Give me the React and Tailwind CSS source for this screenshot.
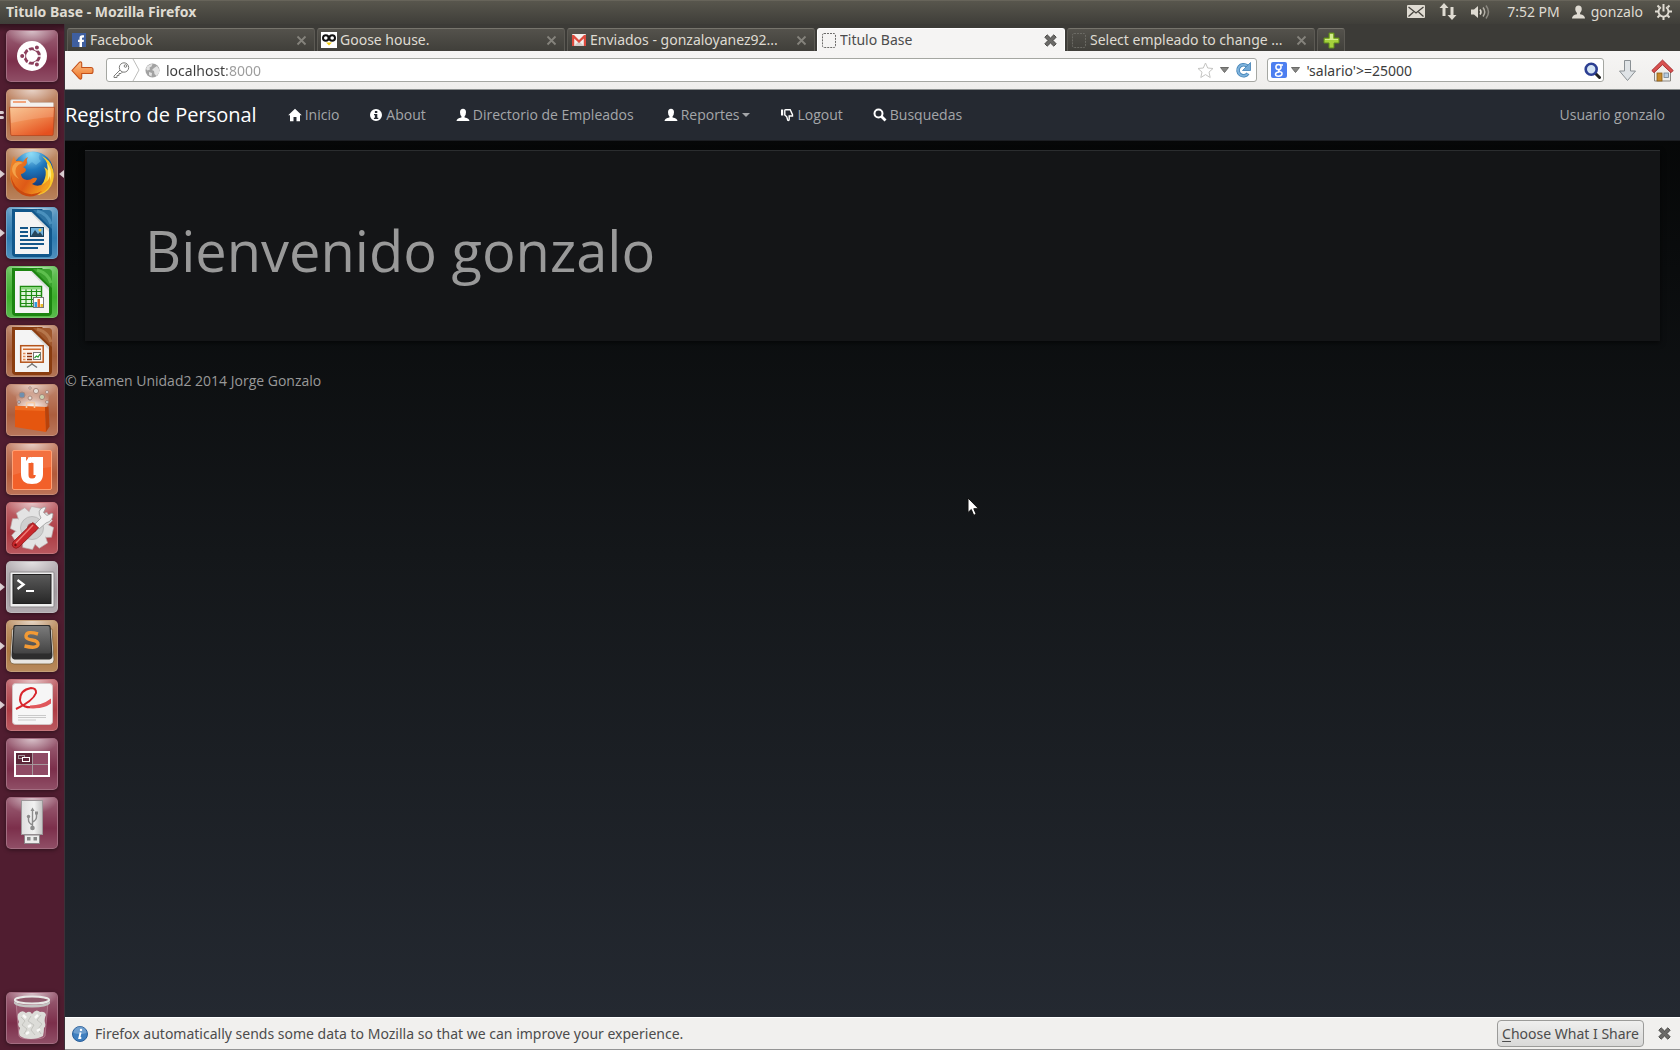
import React from "react";

/* ---------- launcher artwork (52 x 52 drawings) ---------- */

function UbuntuLogo() {
  return (
    <svg viewBox="0 0 52 52" className="size-full" aria-hidden="true">
      <circle cx="26" cy="26" r="15" fill="#fff" />
      <circle cx="26" cy="26" r="7.3" fill="none" stroke="#8b3f5c" strokeWidth="3" />
      <g stroke="#fff" strokeWidth="1.6">
        <path d="M26 26L38 26M26 26L20 15.6M26 26L20 36.4" />
      </g>
      <circle cx="26" cy="26" r="5.6" fill="#fff" />
      <g fill="#8b3f5c" stroke="#fff" strokeWidth="1.2">
        <circle cx="16.2" cy="26" r="2.6" />
        <circle cx="30.9" cy="17.5" r="2.6" />
        <circle cx="30.9" cy="34.5" r="2.6" />
      </g>
    </svg>
  );
}

function Files() {
  return (
    <svg viewBox="0 0 52 52" className="size-full" aria-hidden="true">
      <defs>
        <linearGradient id="folder" x1="0" y1="0" x2=".7" y2="1">
          <stop offset="0" stopColor="#f8bd84" />
          <stop offset=".5" stopColor="#f08a50" />
          <stop offset="1" stopColor="#e5501f" />
        </linearGradient>
      </defs>
      <path d="M4.500 20V12q0-1.500 1.500-1.500h15.500l3 3H46.500q1 0 1 1V20z" fill="#f4f1ee" stroke="#c9b5a8" strokeWidth=".7" />
      <rect x="7" y="12" width="13" height="2" fill="#f2a57c" />
      <path d="M3.500 18.300h45l-1.300 27q-.1 1.200-1.300 1.200H6q-1.200 0-1.300-1.200z" fill="url(#folder)" stroke="#b5481f" strokeWidth=".8" />
      <path d="M4.200 19h43.600l-.4 9Q28 29 5 34z" fill="#fff" opacity=".14" />
    </svg>
  );
}

function FirefoxLogo() {
  return (
    <svg viewBox="0 0 52 52" className="size-full" aria-hidden="true">
      <defs>
        <radialGradient id="globe" cx=".45" cy=".05" r=".8">
          <stop offset="0" stopColor="#8fdcf8" />
          <stop offset=".5" stopColor="#1f78bd" />
          <stop offset="1" stopColor="#123a7a" />
        </radialGradient>
        <linearGradient id="fox" x1="0" y1="0" x2="1" y2=".6">
          <stop offset="0" stopColor="#f08a2c" />
          <stop offset=".6" stopColor="#de5a17" />
          <stop offset="1" stopColor="#f3a01f" />
        </linearGradient>
      </defs>
      <circle cx="27" cy="24" r="20.500" fill="url(#globe)" />
      <path d="M20 6q7-4 14 0q-3 4 1 7l-5 4-4-3-4 3z" fill="#8bdcf8" opacity=".4" />
      <path d="M36 8q8 4 10 11q3 6 1 14q-3 11-14 14l-6-5q10-3 12-12q2-6-1-11q4 2 5 5q0-9-7-16z" fill="#f9c82a" />
      <path d="M41 15q5 6 4 15q-2 12-13 17q10-8 10-18q0-8-1-14z" fill="#fdeb7c" />
      <path d="M8 8q0 3 2 5q4-1 7 1q2-4 5-5q-2 3-1 6q-1 3-4 4q3 1 3 3q-1 3-5 4q0 5 6 6q4 0 6-2q4-1 4 1q-1 3-5 5q6 4 13-1q4-3 5-7q2 10-5 15q-6 5-15 4Q8 45 4.500 32Q2.500 20 8 8z" fill="url(#fox)" />
      <path d="M5 27q2 13 14 18q9 3 17-2q-9 9-20 3.500Q5 41 5 27z" fill="#c9480f" />
      <path d="M9 15q4-2 8 0q-5 1-7 5q-2 6 3 11q-7-4-7-10q0-3 3-6z" fill="#f8b054" opacity=".75" />
    </svg>
  );
}

function OfficePage({ dark, light, children }) {
  return (
    <svg viewBox="0 0 52 52" className="size-full" aria-hidden="true">
      <path d="M6 2H36L46 13V46q0 4-4 4H10q-4 0-4-4z" fill={dark} />
      <path d="M27 3H42q4 0 4 4V22z" fill={dark} />
      <path d="M27 3H42q4 0 4 4V22z" fill={light} opacity=".35" />
      <path d="M31 4Q42 7 45 17" fill="none" stroke={light} strokeWidth="3" opacity=".6" />
      <path d="M9 5H25.500L43 22V47H9z" fill="#f4f4f4" />
      <path d="M25.500 5L43 22V25L24 5z" fill="#d8dcdc" />
      {children}
    </svg>
  );
}

function Writer() {
  return (
    <OfficePage dark="#11578b" light="#5fa5cf">
      <g fill="#14578a">
        <rect x="14" y="20" width="8" height="2" />
        <rect x="14" y="24" width="8" height="2" />
        <rect x="14" y="28" width="8" height="2" />
        <rect x="14" y="32" width="24" height="2" />
        <rect x="14" y="36" width="24" height="2" />
        <rect x="14" y="40" width="18" height="2" />
      </g>
      <rect x="24.500" y="20.500" width="13" height="9" fill="#6fb2dd" stroke="#14405f" />
      <path d="M25 29l4-6 3 4 2-2 3 4z" fill="#27465a" />
      <circle cx="34" cy="23" r="1.500" fill="#f4c542" />
    </OfficePage>
  );
}

function Calc() {
  return (
    <OfficePage dark="#1c8410" light="#74d363">
      <rect x="14.500" y="20.500" width="21" height="20" fill="#e0f4dc" stroke="#1e8a12" strokeWidth="1.500" />
      <path d="M15 25.500h20M15 29.500h20M15 33.500h20M15 37.500h20M20 20v20M25.500 20v20M30.500 20v20" stroke="#1e8a12" strokeWidth="1.200" />
      <rect x="15" y="21" width="20" height="2.500" fill="#8bd77e" />
      <rect x="27.500" y="31.500" width="10" height="10" fill="#fff" stroke="#777" />
      <rect x="28.500" y="36" width="2.500" height="5" fill="#2d9ae0" />
      <rect x="31.500" y="33" width="2.500" height="8" fill="#e36b2a" />
      <rect x="34.500" y="38" width="2.500" height="3" fill="#e8bb2a" />
    </OfficePage>
  );
}

function Impress() {
  return (
    <OfficePage dark="#8a3d10" light="#c58a60">
      <rect x="14.700" y="20.700" width="22.500" height="16.500" fill="#fdf1e8" stroke="#b4541c" strokeWidth="1.500" />
      <rect x="17" y="23.500" width="18" height="1.500" fill="#cf6a2e" />
      <path d="M17 28.500h2.500M17 31.500h2.500M17 34.500h2.500" stroke="#e08a55" strokeWidth="1.700" />
      <path d="M21 28.500h5M21 31.500h5M21 34.500h5" stroke="#8a3510" strokeWidth="1.700" />
      <rect x="27.500" y="27.500" width="7" height="7" fill="#fff" stroke="#777" />
      <path d="M28.500 33l2-2 1.500 1 2-3" fill="none" stroke="#2f9d35" strokeWidth="1.300" />
      <path d="M26 38v2M26 39l-5 3.500M26 39l5 3.500" stroke="#777" strokeWidth="1.500" fill="none" />
    </OfficePage>
  );
}

function SoftwareCentre() {
  return (
    <svg viewBox="0 0 52 52" className="size-full" aria-hidden="true">
      <defs>
        <radialGradient id="burst" cx=".5" cy=".9" r=".8">
          <stop offset="0" stopColor="#fff" stopOpacity=".95" />
          <stop offset="1" stopColor="#fff" stopOpacity="0" />
        </radialGradient>
      </defs>
      <path d="M12 24L9 7h35l-3 17z" fill="url(#burst)" />
      <g strokeWidth="1" stroke="#a9867a">
        <circle cx="16" cy="11" r="3" fill="#6f8fae" />
        <circle cx="30" cy="7" r="2.600" fill="#e4ded8" />
        <circle cx="36" cy="13" r="2.600" fill="#c9d3b2" />
        <circle cx="24" cy="14" r="2" fill="#e8e2dc" />
        <circle cx="41" cy="8" r="1.500" fill="#eee" />
        <circle cx="41" cy="18" r="1.500" fill="#ddd" />
        <circle cx="13" cy="18" r="1.500" fill="#b9c4d6" />
        <circle cx="24" cy="4" r="1.200" fill="#eee" />
      </g>
      <path d="M9 22L39 23 40 48 9 43z" fill="#e5560f" />
      <path d="M9 22L39 23v4L9 26z" fill="#ef6c22" />
      <path d="M39 23l3.500-.5 1 20L40 48z" fill="#b9420a" />
      <path d="M20.500 24v-4.500q0-1 1-1h6q1 0 1 1V24" fill="none" stroke="#f6c9a2" strokeWidth="1.600" />
    </svg>
  );
}

function UbuntuOne() {
  return (
    <svg viewBox="0 0 52 52" className="size-full" aria-hidden="true">
      <rect x="6.500" y="7.500" width="39" height="39" rx="1.500" fill="#f2602a" stroke="#ffa176" />
      <path d="M7 8h38v16Q26 26 7 32z" fill="#fff" opacity=".1" />
      <path d="M15 14H20V18l3-3.500 1-.5h5V32q0 3-2 3.500h-1.500q-3-.5-3-3.500V21l-2.500 0 2-3V14zM15 14h7.500V32q0 3.500 3.500 3.500t3.500-3.500V14H37V31q0 10-11 10T15 31z" fill="#fff" />
      <path d="M22.500 20h2.500V14h4.500V32q0 3.500-3.500 3.500T22.500 32z" fill="#f2602a" />
      <path d="M22 19l3.500-5H30V32h-2.500V20z" fill="#fff" />
    </svg>
  );
}

function Settings() {
  const teeth = [0, 45, 90, 135, 180, 225, 270, 315];
  return (
    <svg viewBox="0 0 52 52" className="size-full" aria-hidden="true">
      <g fill="#e3e3e3" stroke="#b8aaaa" strokeWidth=".6">
        {teeth.map((a) => (
          <path key={a} d="M21 5h10l2 8H19z" transform={`rotate(${a + 12} 26 26)`} />
        ))}
      </g>
      <circle cx="26" cy="26" r="16" fill="#e3e3e3" />
      <circle cx="26" cy="26" r="11.500" fill="#cfcfcf" stroke="#bbb" />
      <circle cx="26" cy="26" r="5" fill="#a84a50" />
      <path d="M29 22L35 16Q30 8 38 5l2 .5-2.500 5 3.500 3 5-2.500 1 1Q47 19 40 21l-7 6z" fill="#f1f1f1" stroke="#9b9b9b" strokeWidth=".8" />
      <path d="M27 20.500L32.500 26 13 45q-3 2.500-5.500.3T7 40z" fill="#c9282c" stroke="#8e1518" strokeWidth=".8" />
      <path d="M27 23L10 41" stroke="#ee7d78" strokeWidth="1.400" />
      <circle cx="9.500" cy="43" r="1.200" fill="#6d0d10" />
    </svg>
  );
}

function Terminal() {
  return (
    <svg viewBox="0 0 52 52" className="size-full" aria-hidden="true">
      <defs>
        <linearGradient id="term" x1="0" y1="0" x2="0" y2="1">
          <stop offset="0" stopColor="#5a5a5a" />
          <stop offset="1" stopColor="#272727" />
        </linearGradient>
      </defs>
      <rect x="4" y="11" width="44" height="35" rx="1" fill="#eee" stroke="#8d8a8c" />
      <rect x="7" y="13.500" width="38" height="29" fill="url(#term)" stroke="#202020" />
      <path d="M11.500 19l6 4.500-6 4.500" fill="none" stroke="#fff" strokeWidth="2.400" />
      <path d="M20 30h8" stroke="#fff" strokeWidth="2" />
    </svg>
  );
}

function Sublime() {
  return (
    <svg viewBox="0 0 52 52" className="size-full" aria-hidden="true">
      <defs>
        <linearGradient id="key" x1="0" y1="0" x2="0" y2="1">
          <stop offset="0" stopColor="#7b7b7b" />
          <stop offset="1" stopColor="#434343" />
        </linearGradient>
      </defs>
      <path d="M6 9L4 40q0 4 4 4H44q4 0 4-4L46 9z" fill="#e9e6e1" stroke="#7b5f3b" strokeWidth=".8" />
      <path d="M9 5H43q1.500 0 1.700 2L46.500 35q0 4-3 4.500H8.500q-3-.5-3-4.500L7.300 7Q7.500 5 9 5z" fill="#2d2d2d" />
      <path d="M10 6H42q1.300 0 1.500 1.500L45 31q0 2.500-2 2.500H9q-2 0-2-2.500L8.500 7.500Q8.700 6 10 6z" fill="url(#key)" />
      <path d="M32 14Q20.500 10.500 20 16q-.3 3 6 4t6 4.500Q31 29 18.500 26" fill="none" stroke="#f29a35" strokeWidth="3.400" />
    </svg>
  );
}

function DocViewer() {
  return (
    <svg viewBox="0 0 52 52" className="size-full" aria-hidden="true">
      <rect x="6.500" y="4.500" width="40" height="41" rx="3" fill="#f6f6f6" stroke="#d3c4c4" />
      <path d="M10 30Q27 22 30 14q.5-5-5-5Q14 11 14 21q1 9 16 7" fill="none" stroke="#d8262c" strokeWidth="2" />
      <path d="M24 26.500q12 0 21-7v5q-8 6-21 4.500z" fill="#e0575b" />
      <path d="M12 36.500h28M12 38.500h28M12 41h18" stroke="#c9c9c9" strokeWidth="1.200" />
    </svg>
  );
}

function Workspaces() {
  return (
    <svg viewBox="0 0 52 52" className="size-full" aria-hidden="true">
      <rect x="9" y="14" width="34" height="24" fill="#8f4a64" />
      <rect x="9" y="14" width="17" height="12" fill="#5c2639" />
      <path d="M26.500 14v24M9 26.500h34" stroke="#a5989c" />
      <rect x="9" y="14" width="34" height="24" fill="none" stroke="#fff" strokeWidth="2" />
      <rect x="12.500" y="17.500" width="6" height="3" fill="none" stroke="#a5989c" />
      <rect x="16.500" y="19.500" width="7" height="4" fill="#5c2639" stroke="#fff" />
    </svg>
  );
}

function UsbDrive() {
  return (
    <svg viewBox="0 0 52 52" className="size-full" aria-hidden="true">
      <defs>
        <linearGradient id="usb" x1="0" y1="0" x2="1" y2="0">
          <stop offset="0" stopColor="#dedede" />
          <stop offset=".6" stopColor="#f2f2f2" />
          <stop offset="1" stopColor="#c2c2c2" />
        </linearGradient>
      </defs>
      <rect x="15.500" y="3.500" width="21" height="34" fill="url(#usb)" stroke="#9d9699" />
      <rect x="18.500" y="38" width="15" height="8.500" fill="#ececec" stroke="#8b8487" />
      <rect x="21" y="40" width="3.500" height="3.500" fill="#868686" />
      <rect x="27.500" y="40" width="3.500" height="3.500" fill="#868686" />
      <g stroke="#8c8c8c" strokeWidth="1.400" fill="none">
        <path d="M26.500 13v17M26.500 28q-4-2-4-5v-3M26.500 25q4-2 4-5v-3" />
      </g>
      <g fill="#8c8c8c">
        <path d="M26.500 10.500l2 3.500h-4z" />
        <circle cx="26.500" cy="31" r="2.300" />
        <circle cx="22.500" cy="19.500" r="1.700" />
        <rect x="29" y="14.500" width="3" height="3" />
      </g>
    </svg>
  );
}

function Trash() {
  return (
    <svg viewBox="0 0 52 52" className="size-full" aria-hidden="true">
      <path d="M10 10l3 34q.5 3 13 3t13-3l3-34z" fill="#a5667c" opacity=".6" stroke="#c99aa9" />
      <path d="M12 22q4-5 8-1 4-3 6 1 4-6 8-2 5-1 6 3-2 4-1 8 1 3-1 5 0 4-1 8-5 3-12 3t-11-3q-2-4 0-8-3-3-1-6-2-4-1-8z" fill="#dcdcd8" />
      <path d="M15 25l4 4-3 4 5 4-3 5M25 24l-3 5 6 4-3 5 4 5M35 23l-4 5 5 4-4 5 3 5" fill="none" stroke="#c4c4bf" strokeWidth="1" />
      <path d="M17 23l3 3M29 26l3-3M22 35l3-2M31 39l3-2M20 42l3-2" stroke="#fafaf8" strokeWidth="2.500" />
      <ellipse cx="26" cy="8" rx="17" ry="3.500" fill="#8f5a6c" stroke="#e8e8e6" strokeWidth="2.200" />
      <path d="M8 9v2.500q3 4 18 4t18-4V9q-3 4-18 4T8 9z" fill="#c4c4c2" />
    </svg>
  );
}

function LauncherTile({ label, tone, running, active, children }) {
  return (
    <div className="relative flex h-13 w-full shrink-0 items-center pl-1.5">
      {running && (
        <span className="absolute top-1/2 left-0 size-0 -translate-y-1/2 border-y-4 border-l-5 border-y-transparent border-l-[#dccfd3]" />
      )}
      {active && (
        <span className="absolute top-1/2 right-0 size-0 -translate-y-1/2 border-y-4 border-r-5 border-y-transparent border-r-[#dccfd3]" />
      )}
      <button
        type="button"
        aria-label={label}
        className={`relative size-13 overflow-hidden rounded-[5px] border border-white/30 shadow-[0_1px_4px_rgba(0,0,0,0.45)] ${tone}`}
      >
        <span className="absolute inset-0 bg-linear-to-b from-white/25 via-white/0 via-60% to-white/15" />
        <span className="absolute inset-0 bg-[radial-gradient(26px_16px_at_50%_0%,rgba(255,255,255,0.6),rgba(255,255,255,0))]" />
        <span className="relative -m-px block size-13">{children}</span>
      </button>
    </div>
  );
}

const TILES = [
  { label: "Dash home", tone: "bg-[#7c2f4b]", art: <UbuntuLogo /> },
  { label: "Files", tone: "bg-[#b06a42]", art: <Files />, windows: true },
  { label: "Firefox Web Browser", tone: "bg-[#ac6c3f]", art: <FirefoxLogo />, running: true, active: true },
  { label: "LibreOffice Writer", tone: "bg-[#2f7cb1]", art: <Writer />, running: true },
  { label: "LibreOffice Calc", tone: "bg-[#3cae2c]", art: <Calc /> },
  { label: "LibreOffice Impress", tone: "bg-[#a45c38]", art: <Impress /> },
  { label: "Ubuntu Software Center", tone: "bg-[#ac5e3e]", art: <SoftwareCentre /> },
  { label: "Ubuntu One", tone: "bg-[#b25a3a]", art: <UbuntuOne /> },
  { label: "System Settings", tone: "bg-[#ac3a42]", art: <Settings /> },
  { label: "Terminal", tone: "bg-[#a39ca1]", art: <Terminal />, running: true },
  { label: "Sublime Text", tone: "bg-[#ac7640]", art: <Sublime />, running: true },
  { label: "Document Viewer", tone: "bg-[#ae3c44]", art: <DocViewer />, running: true },
  { label: "Workspace Switcher", tone: "bg-[#7c2f4b]", art: <Workspaces /> },
  { label: "USB drive", tone: "bg-[#7c2f4b]", art: <UsbDrive /> },
];

function Launcher() {
  return (
    <nav
      aria-label="Launcher"
      className="flex w-[65px] shrink-0 flex-col gap-[7px] border-r border-[#3d3038] bg-[#501d30] bg-[linear-gradient(to_bottom,rgba(0,0,0,0.4),rgba(0,0,0,0)_8px)] pt-1.5 pb-1.5"
    >
      {TILES.map((t) => (
        <div key={t.label} className="relative">
          {t.windows && (
            <span className="absolute top-[22px] left-0 flex flex-col gap-0.5">
              <span className="h-[3px] w-1 rounded-r bg-[#dccfd3]" />
              <span className="h-[3px] w-1 rounded-r bg-[#dccfd3]" />
            </span>
          )}
          <LauncherTile label={t.label} tone={t.tone} running={t.running} active={t.active}>
            {t.art}
          </LauncherTile>
        </div>
      ))}
      <div className="mt-auto">
        <LauncherTile label="Trash" tone="bg-[#7c2f4b]">
          <Trash />
        </LauncherTile>
      </div>
    </nav>
  );
}

/* ---------- top panel ---------- */

function TopPanel() {
  return (
    <header className="flex h-6 shrink-0 items-center justify-between border-t border-[#67645a] bg-gradient-to-b from-[#58564d] to-[#3f3e39] pr-2 pb-0.5 pl-1.5 text-[14px] leading-5 text-[#dfdbd2]">
      <h1 className="text-[14px] font-bold">Titulo Base - Mozilla Firefox</h1>
      <div className="flex items-center">
        <svg width="18" height="13" viewBox="0 0 18 13" aria-hidden="true">
          <rect width="18" height="13" rx="1" fill="#dfdbd2" />
          <path d="M1.500 2l7.500 6 7.500-6M1.500 11.500L6.500 7M16.500 11.500L11.500 7" fill="none" stroke="#46443e" strokeWidth="1.300" />
        </svg>
        <svg className="ml-3.5" width="18" height="17" viewBox="0 0 18 17" fill="#dfdbd2" aria-hidden="true">
          <path d="M5 0l4.500 5H6.500v8h-3V5H.5zM13 17l-4.500-5h3V4h3v8h3z" />
        </svg>
        <svg className="ml-3.5" width="20" height="16" viewBox="0 0 20 16" aria-hidden="true">
          <path d="M0 5.500h3L7 2v12l-4-3.500H0z" fill="#dfdbd2" />
          <path d="M9 5.500q2 2.500 0 5" fill="none" stroke="#dfdbd2" strokeWidth="1.500" />
          <path d="M12 3.500q3.500 4.500 0 9" fill="none" stroke="#b5b1a8" strokeWidth="1.500" />
          <path d="M15 1.500q5 6.500 0 13" fill="none" stroke="#8b8880" strokeWidth="1.500" />
        </svg>
        <span className="ml-4">7:52 PM</span>
        <svg className="ml-3" width="13" height="14" viewBox="0 0 14 14" fill="#dfdbd2" aria-hidden="true">
          <path d="M7 0q3.500 0 3.500 4 0 2.500-1.800 4v1.500Q14 10.500 14 14H0q0-3.500 5.300-4.500V8Q3.500 6.500 3.500 4 3.500 0 7 0z" />
        </svg>
        <span className="ml-1.5">gonzalo</span>
        <svg className="ml-3" width="17" height="17" viewBox="0 0 17 17" fill="none" stroke="#dfdbd2" aria-hidden="true">
          <path d="M6 4.300a5 5 0 1 0 5 0" strokeWidth="1.900" />
          <path d="M8.500 1v7.500" strokeWidth="2" />
          <path d="M0 8.500h3M14 8.500h3M8.500 14v3M2.500 2.500l2 2M14.500 2.500l-2 2M2.500 14.500l2-2M14.500 14.500l-2-2" strokeWidth="2" />
        </svg>
      </div>
    </header>
  );
}

/* ---------- browser chrome ---------- */

function CloseGlyph({ color }) {
  return (
    <svg width="11" height="11" viewBox="0 0 11 11" fill="none" stroke={color} strokeWidth="1.800" aria-hidden="true">
      <path d="M1.500 1.500l8 8M9.500 1.500l-8 8" />
    </svg>
  );
}

function HeavyClose() {
  return (
    <svg width="13" height="13" viewBox="0 0 13 13" fill="#6b6a68" stroke="#454442" strokeWidth=".9" aria-hidden="true">
      <path d="M3.200.8L6.500 4 9.800.8l2.400 2.400L9 6.500l3.200 3.300-2.400 2.400L6.500 9l-3.300 3.200L.8 9.800 4 6.500.8 3.200z" />
    </svg>
  );
}

function BlankFavicon({ color }) {
  return (
    <svg width="14" height="15" viewBox="0 0 14 15" aria-hidden="true">
      <rect x=".5" y=".5" width="13" height="14" rx="1.500" fill="none" stroke={color} strokeDasharray="2 1" />
    </svg>
  );
}

const FacebookIcon = (
  <svg width="14" height="14" viewBox="0 0 14 14" aria-hidden="true">
    <rect width="14" height="14" fill="#3f5f9f" />
    <path d="M7.500 14V9H6V6.800h1.500V5q0-2.800 2.800-2.800H12v2.200h-1.100q-.9 0-.9.900v1.500h2L11.700 9H10v5z" fill="#fff" />
  </svg>
);
const GooseIcon = (
  <svg width="16" height="16" viewBox="0 0 16 16" aria-hidden="true">
    <rect width="16" height="16" fill="#fff" />
    <circle cx="4.800" cy="6" r="2.800" fill="none" stroke="#111" strokeWidth="2" />
    <circle cx="11.200" cy="6" r="2.800" fill="none" stroke="#111" strokeWidth="2" />
    <path d="M5 10.500h6L8 13.500z" fill="#f3cd12" />
  </svg>
);
const GmailIcon = (
  <svg width="14" height="13" viewBox="0 0 14 13" aria-hidden="true">
    <rect width="14" height="12" rx="1" fill="#f3efec" />
    <path d="M2 12l5-5 5 5z" fill="#d4cdc9" />
    <path d="M0 12V1h2l5 5 5-5h2v11h-2.200V4.500L7 9 2.200 4.500V12z" fill="#dd4b3e" />
  </svg>
);

const TABS = [
  { title: "Facebook", icon: FacebookIcon },
  { title: "Goose house.", icon: GooseIcon },
  { title: "Enviados - gonzaloyanez92...", icon: GmailIcon },
  { title: "Titulo Base", icon: <BlankFavicon color="#6b6a68" />, active: true },
  { title: "Select empleado to change ...", icon: <BlankFavicon color="#6b6a64" /> },
];

function Tab({ title, icon, active }) {
  return (
    <div
      className={
        active
          ? "flex h-[23px] min-w-0 flex-[0_1_248px] items-center gap-[3px] rounded-t-[3px] border-x border-t border-white bg-[#f5f4f3] pr-[7px] pl-[3px] text-[#4c4c4c]"
          : "flex h-[23px] min-w-0 flex-[0_1_248px] items-center gap-[3px] rounded-t-[3px] border-x border-t border-x-[#5c5a54] border-t-[#76746c] bg-gradient-to-b from-[#54524c] to-[#403f3a] pr-[7px] pl-[3px] text-[#dfdbd2]"
      }
    >
      <span className="flex w-4 shrink-0 justify-center">{icon}</span>
      <button type="button" className="min-w-0 flex-1 overflow-hidden text-left whitespace-nowrap">
        {title}
      </button>
      <button type="button" aria-label={`Close ${title}`} className="shrink-0">
        {active ? <HeavyClose /> : <CloseGlyph color="#85837c" />}
      </button>
    </div>
  );
}

function TabStrip() {
  return (
    <div className="flex h-[27px] shrink-0 items-end gap-0.5 bg-[#3c3b37] pl-0.5 text-[14px] leading-5">
      {TABS.map((t) => (
        <Tab key={t.title} {...t} />
      ))}
      <button
        type="button"
        aria-label="Open a new tab"
        className="flex h-[23px] w-7 items-center justify-center rounded-t-[3px] border-x border-t border-x-[#5c5a54] border-t-[#76746c] bg-gradient-to-b from-[#54524c] to-[#403f3a]"
      >
        <svg width="17" height="17" viewBox="0 0 17 17" aria-hidden="true">
          <path d="M6 1h5v5h5v5h-5v5H6v-5H1V6h5z" fill="#a5d13c" stroke="#5f8a1c" />
          <path d="M7 2h3v5h5v1H2V7h5z" fill="#d2ec8b" />
        </svg>
      </button>
    </div>
  );
}

function Toolbar() {
  return (
    <div className="flex h-[39px] shrink-0 items-center border-b border-[#8b8f8e] bg-gradient-to-b from-[#f6f5f4] to-[#efeeec] pr-1.5 pl-1.5 text-[14px] leading-5 text-[#3c3c3c]">
      <button type="button" aria-label="Back">
        <svg width="23" height="19" viewBox="0 0 23 19" aria-hidden="true">
          <defs>
            <linearGradient id="back" x1="0" y1="0" x2="0" y2="1">
              <stop offset="0" stopColor="#fbc08a" />
              <stop offset="1" stopColor="#ee7425" />
            </linearGradient>
          </defs>
          <path d="M8.500 1.200q2-1 2.200 1V6.500H20q2 0 2 2v2q0 2-2 2h-9.300v4.300q-.2 2-2.200 1L1 9.500z" fill="url(#back)" stroke="#c4511a" strokeWidth="1.100" />
        </svg>
      </button>
      <div className="ml-3 flex h-6 min-w-0 flex-1 items-center rounded-[3px] border border-[#a5a7a2] bg-white pr-1 pl-1.5">
        <svg className="shrink-0" width="17" height="16" viewBox="0 0 17 16" fill="none" stroke="#7c7c7a" aria-hidden="true">
          <circle cx="11" cy="5.500" r="4.700" />
          <circle cx="12.500" cy="4" r="1.300" />
          <path d="M7 8l-6 6v1.500h3v-2h2v-2h2L9.500 10" />
        </svg>
        <svg className="ml-0.5 shrink-0" width="9" height="22" viewBox="0 0 9 22" fill="none" stroke="#bdbdbb" aria-hidden="true">
          <path d="M1 0l6 11-6 11" />
        </svg>
        <svg className="ml-1 shrink-0" width="15" height="15" viewBox="0 0 15 15" aria-hidden="true">
          <circle cx="7.500" cy="7.500" r="7" fill="#a2a2a2" />
          <path d="M2 3.500q3-3 5.500-2.500l-1 2.500-2 1 .5 2-2.500 1L1 6zM9 5l3-2 2 3v4l-2.500 3-2-2L9 8 7 7zM4 9l3 1-.5 3.500L4 12z" fill="#e2e2e2" />
        </svg>
        <input
          type="text"
          aria-label="Address"
          defaultValue="localhost:8000"
          className="ml-1.5 min-w-0 flex-1 bg-linear-to-r from-[#3c3c3c] from-[61px] to-[#9b9b9b] to-[61px] bg-clip-text pt-0.5 text-transparent caret-black outline-none"
        />
        <button type="button" aria-label="Bookmark this page">
          <svg width="17" height="17" viewBox="0 0 17 17" fill="none" stroke="#c4c4c2" aria-hidden="true">
            <path d="M8.500 1l2.200 5 5.300.5-4 3.600 1.200 5.400-4.700-2.900-4.700 2.900L5 10.100 1 6.500 6.300 6z" />
          </svg>
        </button>
        <button type="button" aria-label="Show history" className="ml-1.5">
          <svg width="9" height="6" viewBox="0 0 9 6" aria-hidden="true">
            <path d="M.5.500h8l-4 5z" fill="#858583" stroke="#6b6b69" />
          </svg>
        </button>
        <button type="button" aria-label="Reload" className="ml-1.5">
          <svg width="17" height="17" viewBox="0 0 17 17" aria-hidden="true">
            <path d="M13 11.500A5.500 5.500 0 1 1 12 4" fill="none" stroke="#4180b4" strokeWidth="3.600" />
            <path d="M13 11.500A5.500 5.500 0 1 1 12 4" fill="none" stroke="#7db2dc" strokeWidth="2" />
            <path d="M15.500.500v8h-8z" fill="#72a9d6" stroke="#4180b4" strokeWidth=".8" />
          </svg>
        </button>
      </div>
      <div className="ml-2.5 flex h-6 w-[21%] items-center rounded-[3px] border border-[#a5a7a2] bg-white pr-0.5 pl-[3px]">
        <span className="flex size-4 shrink-0 items-center justify-center rounded-[2px] bg-[#4d7ff0]">
          <svg width="10" height="14" viewBox="0 0 10 14" fill="none" stroke="#fff" strokeWidth="1.500" aria-hidden="true">
            <circle cx="4.500" cy="4" r="2.600" />
            <path d="M6 2h3M6 6.300q-2 1.200-1 2.200 3.500.5 3 2.500-.5 2.200-3.500 2.200T1.500 11.200q0-2 3.500-2.300" />
          </svg>
        </span>
        <svg className="ml-1 shrink-0" width="9" height="6" viewBox="0 0 9 6" aria-hidden="true">
          <path d="M.5.500h8l-4 5z" fill="#858583" stroke="#6b6b69" />
        </svg>
        <input
          type="text"
          aria-label="Search the web"
          defaultValue="'salario'>=25000"
          className="ml-1.5 min-w-0 flex-1 bg-transparent pt-0.5 outline-none"
        />
        <button type="button" aria-label="Search" className="shrink-0">
          <svg width="17" height="17" viewBox="0 0 17 17" aria-hidden="true">
            <path d="M11.500 11.500l4 4" stroke="#222" strokeWidth="3" strokeLinecap="round" />
            <circle cx="7.200" cy="7.200" r="5.500" fill="#d4e4f4" stroke="#2c3f92" strokeWidth="2.600" />
          </svg>
        </button>
      </div>
      <button type="button" aria-label="Downloads" className="ml-3.5">
        <svg width="19" height="23" viewBox="0 0 19 23" aria-hidden="true">
          <path d="M6.500 1.500h6V12h5l-8 9.500-8-9.500h5z" fill="#dfe3e6" stroke="#8a9094" />
        </svg>
      </button>
      <button type="button" aria-label="Home" className="ml-3.5">
        <svg width="23" height="23" viewBox="0 0 23 23" aria-hidden="true">
          <path d="M3.500 11L11.500 4l8 7v11h-16z" fill="#f0eeea" stroke="#8b8883" />
          <rect x="6" y="14" width="5" height="8" fill="#c98a2a" stroke="#8b5c16" strokeWidth=".8" />
          <rect x="13" y="14" width="4.500" height="4.500" fill="#b9cde0" stroke="#6f7f8f" strokeWidth=".8" />
          <path d="M.8 11.500L11.500 1l10.700 10.500-2.200 2.200-8.500-8-8.500 8z" fill="#d9504e" stroke="#9f2a2c" strokeWidth=".9" />
        </svg>
      </button>
    </div>
  );
}

/* ---------- web page ---------- */

const ICONS = {
  home: <path d="M7 .8L13.800 7.300H12v6H8.500V9h-3v4.300H2v-6H.200z" />,
  info: (
    <path
      fillRule="evenodd"
      d="M7 1a6 6 0 1 0 0 12A6 6 0 0 0 7 1zM5.900 3h2.400v2H5.900zM5 6h3.300v3.700h1V11H4.900V9.700h1V7.200H5z"
    />
  ),
  user: <path d="M7 .8q3 0 3 3.500 0 2.500-1.400 4v1.200q4.600.800 4.900 3.500H.500Q.800 10.300 5.400 9.500V8.300Q4 6.800 4 4.300 4 .8 7 .8z" />,
  thumbsDown: (
    <g>
      <path d="M1 1.500h2.200v6H1z" />
      <path d="M4.800 2.200l1-.5h4.400l2.300 5V8H9.200v3.300q0 1.200-.9 1.200-.7 0-.9-1.300L6.800 8.800 4.800 7z" fill="none" stroke="currentColor" strokeWidth="1.400" />
    </g>
  ),
  search: (
    <g fill="none" stroke="currentColor">
      <circle cx="5.500" cy="5.500" r="4" strokeWidth="2" />
      <path d="M8.500 8.500l4 4" strokeWidth="2.800" />
    </g>
  ),
};

const LINKS = [
  { text: "Inicio", icon: "home" },
  { text: "About", icon: "info" },
  { text: "Directorio de Empleados", icon: "user" },
  { text: "Reportes", icon: "user", caret: true },
  { text: "Logout", icon: "thumbsDown" },
  { text: "Busquedas", icon: "search" },
];

function SiteNav() {
  return (
    <nav className="flex h-[51px] shrink-0 items-center justify-between border-b border-[#1c1e22] bg-[#252931] pr-[15px] text-[14px] leading-5 text-[#a4a6a9]">
      <div className="flex items-center">
        <a href="#inicio" className="pr-4 text-[20px] whitespace-nowrap text-white">
          Registro de Personal
        </a>
        <ul className="flex items-center">
          {LINKS.map((l) => (
            <li key={l.text}>
              <a href={`#${l.text.toLowerCase()}`} className="flex items-center gap-[3px] px-[15px] py-[15px] whitespace-nowrap">
                <svg className="text-white" width="14" height="14" viewBox="0 0 14 14" fill="currentColor" aria-hidden="true">
                  {ICONS[l.icon]}
                </svg>
                {l.text}
                {l.caret && <span className="size-0 border-x-4 border-t-4 border-x-transparent border-t-[#a4a6a9]" />}
              </a>
            </li>
          ))}
        </ul>
      </div>
      <p className="whitespace-nowrap">Usuario gonzalo</p>
    </nav>
  );
}

function WebPage() {
  return (
    <div className="flex flex-1 flex-col bg-gradient-to-b from-[#050606] via-[#14171a] to-[#242931] font-['Open_Sans','Noto_Sans',sans-serif]">
      <SiteNav />
      <main className="mx-5 mt-[9px] border-t border-[#2b2d2f] bg-[#141517] px-[60px] pt-[66px] pb-[58px] shadow-[0_2px_5px_rgba(0,0,0,0.6)]">
        <h2 className="text-[56px] leading-[66px] text-[#999]">Bienvenido gonzalo</h2>
      </main>
      <footer className="mt-[30px] text-[14px] leading-5 text-[#999]">© Examen Unidad2 2014 Jorge Gonzalo</footer>
    </div>
  );
}

function InfoBar() {
  return (
    <div className="flex h-[33px] shrink-0 items-center border-t border-b border-t-white border-b-[#949494] bg-[#f1f0ee] pr-[9px] pl-[7px] text-[14px] leading-5 text-[#4c4c4c]">
      <svg width="16" height="16" viewBox="0 0 16 16" aria-hidden="true">
        <circle cx="8" cy="8" r="7.500" fill="#3f7fbf" stroke="#2a5f99" />
        <path d="M1.500 7a6.500 6.500 0 0 1 13 0q-6 2-13 0z" fill="#fff" opacity=".25" />
        <path d="M8.600 6.500L7.300 12h2" fill="none" stroke="#fff" strokeWidth="1.900" />
        <circle cx="9" cy="3.900" r="1.200" fill="#fff" />
      </svg>
      <p className="ml-[7px] min-w-0 flex-1">
        Firefox automatically sends some data to Mozilla so that we can improve your experience.
      </p>
      <button
        type="button"
        className="flex h-[27px] items-center rounded-[4px] border border-[#9b9b99] bg-gradient-to-b from-[#efefee] to-[#d9d9d8] px-1"
      >
        <span>
          <span className="underline underline-offset-2">C</span>hoose What I Share
        </span>
      </button>
      <button type="button" aria-label="Dismiss" className="ml-3.5">
        <HeavyClose />
      </button>
    </div>
  );
}

export default function App() {
  return (
    <div className="relative flex min-h-screen flex-col bg-[#3c3b37] font-['Noto_Sans','Open_Sans',sans-serif]">
      <TopPanel />
      <div className="flex flex-1">
        <Launcher />
        <div className="flex min-w-0 flex-1 flex-col">
          <TabStrip />
          <Toolbar />
          <WebPage />
          <InfoBar />
        </div>
      </div>
      <svg className="pointer-events-none absolute top-[497px] left-[967px]" width="13" height="20" viewBox="0 0 13 20" aria-hidden="true">
        <path d="M1 1v14.500l3.300-3 2.400 5.800 2.500-1-2.400-5.600H11.500z" fill="#fff" stroke="#111" />
      </svg>
    </div>
  );
}
